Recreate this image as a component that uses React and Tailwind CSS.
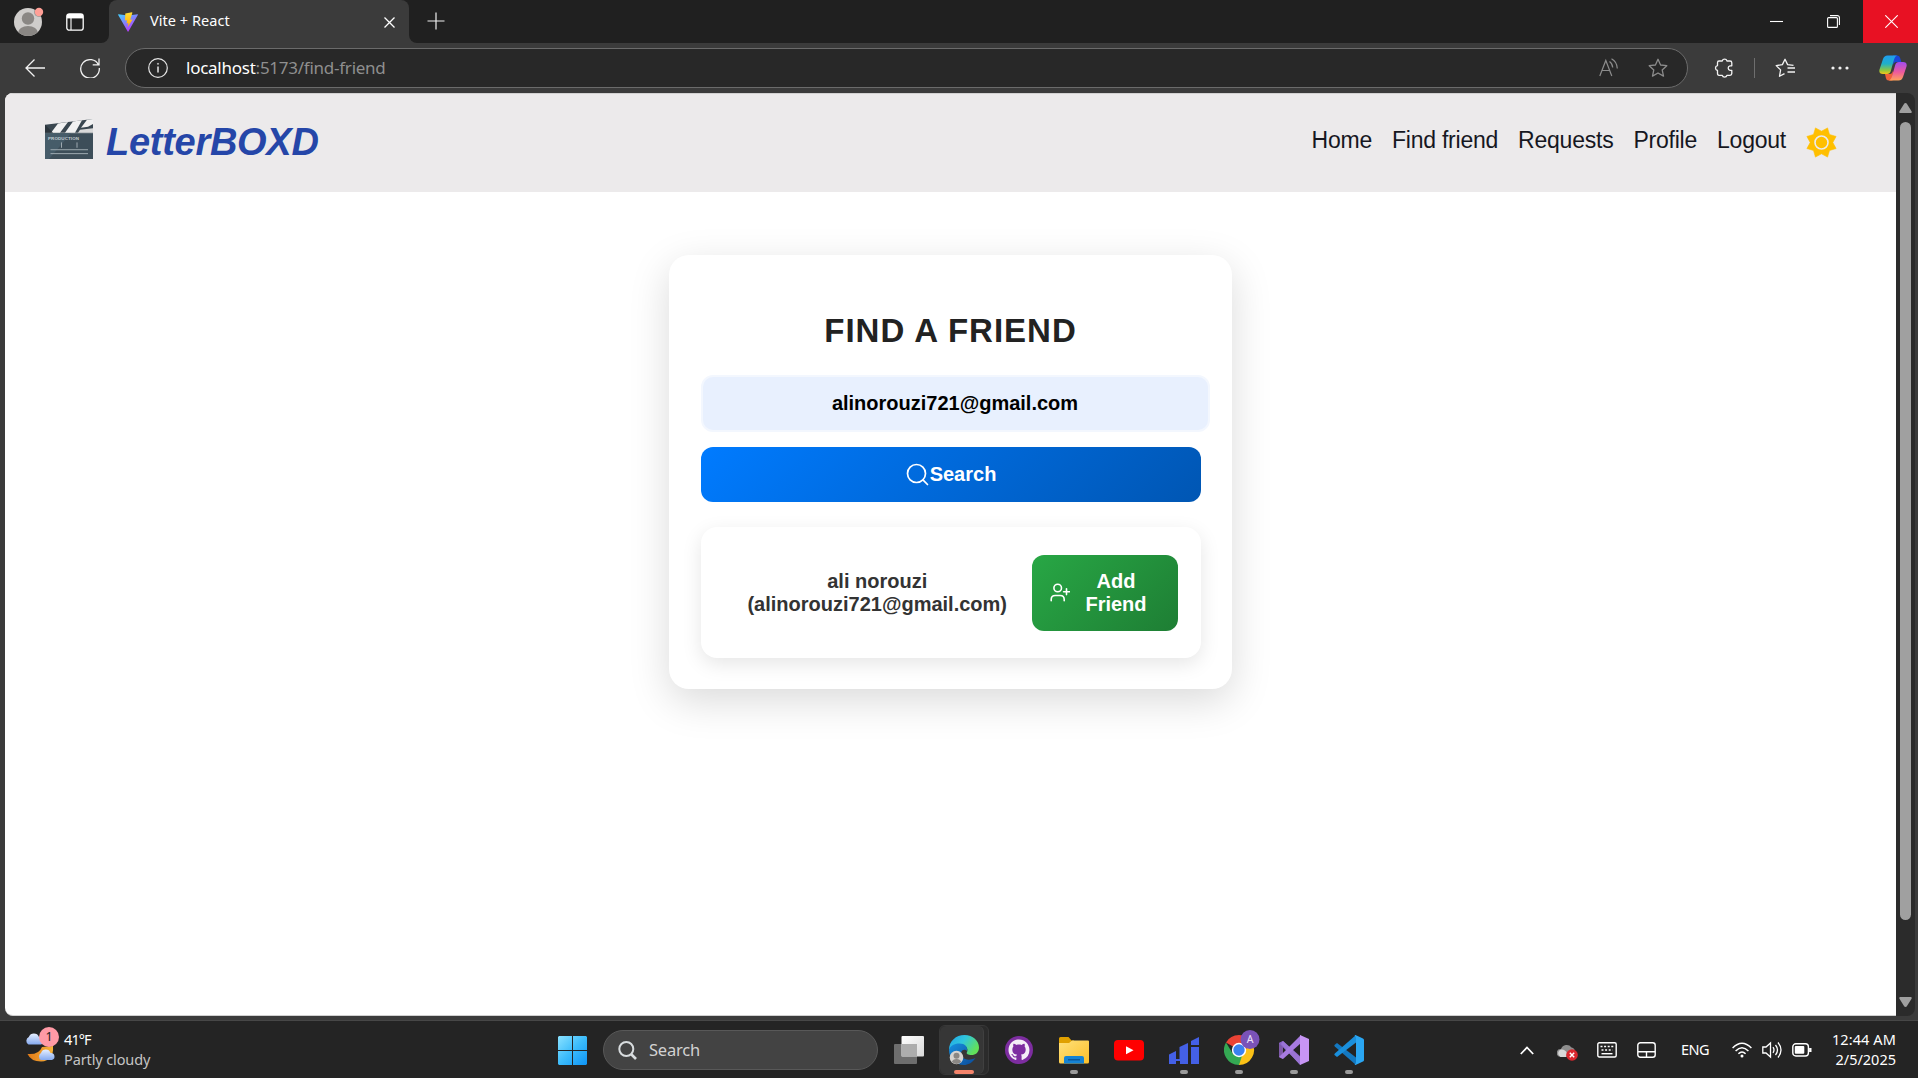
import React from "react";

const UI = "font-['Noto_Sans','Open_Sans',sans-serif]";
const WEB = "font-['Liberation_Sans',Arial,sans-serif]";

const ViteLogo = () => (
  <svg viewBox="0 0 20 20" className="h-5 w-5">
    <defs>
      <linearGradient id="viteA" x1="0" y1="0" x2="0.6" y2="1">
        <stop offset="0" stopColor="#41d1ff" />
        <stop offset="1" stopColor="#bd34fe" />
      </linearGradient>
      <linearGradient id="viteB" x1="0" y1="0" x2="0" y2="1">
        <stop offset="0" stopColor="#ffdd35" />
        <stop offset="1" stopColor="#ffa800" />
      </linearGradient>
    </defs>
    <path d="M0.3 2.2 10 3.6 19.7 2.2Q20 2.4 19.8 3L10.4 19.6Q10 20 9.7 19.6L.2 3Q0 2.4.3 2.2Z" fill="url(#viteA)" />
    <path d="M14 .3 7.3 1.6 7 8.6 9 8.2 8.6 11.5 10.4 11 9.6 15.2 14.6 7.4 12.2 7.8 14.4.8Z" fill="url(#viteB)" />
  </svg>
);

function TabBar() {
  return (
    <div className="flex h-[43px] bg-[#202020] text-white">
      <div className="flex w-[101px] items-center gap-6 bg-[#202020] pl-[14px]">
        <svg viewBox="0 0 30 30" className="h-[30px] w-[30px]">
          <defs><clipPath id="av"><circle cx="14" cy="15" r="14" /></clipPath></defs>
          <circle cx="14" cy="15" r="14" fill="#cfcdcb" />
          <g clipPath="url(#av)" fill="#8a8784">
            <circle cx="14" cy="11.5" r="6.2" />
            <ellipse cx="14" cy="26" rx="10" ry="7" />
          </g>
          <circle cx="25" cy="5" r="5" fill="#202020" opacity=".3" />
          <circle cx="25" cy="5" r="4.2" fill="#ff9f96" />
        </svg>
        <svg viewBox="0 0 18 18" className="ml-[-2px] h-[18px] w-[18px]" fill="none" stroke="#fff" strokeWidth="1.3">
          <rect x=".8" y=".8" width="16.4" height="16.4" rx="2.5" />
          <path d="M1 3.2h16" strokeWidth="4.4" />
          <path d="M5 5v12" strokeWidth="1.1" />
        </svg>
      </div>
      <div className="flex w-2 flex-col bg-[#3b3b3b]">
        <div className="h-full rounded-br-lg bg-[#202020]" />
      </div>
      <div className="flex w-[300px] items-center rounded-t-lg bg-[#3b3b3b] pl-[9px]">
        <ViteLogo />
        <span className={`mb-[2px] ml-3 flex-1 whitespace-nowrap text-[14.500px] leading-none tracking-[0.050px] ${UI}`}>Vite + React</span>
        <svg viewBox="0 0 11 11" className="mr-[14px] mt-px h-[11px] w-[11px]" stroke="#fff" strokeWidth="1.3"><path d="M.5.5l10 10M10.5.5l-10 10" /></svg>
      </div>
      <div className="flex w-2 flex-col bg-[#3b3b3b]">
        <div className="h-full rounded-bl-lg bg-[#202020]" />
      </div>
      <svg viewBox="0 0 18 18" className="ml-[10px] mt-3 h-[18px] w-[18px]" stroke="#f0f0f0" strokeWidth="1.2"><path d="M9 .5v17M.5 9h17" /></svg>
      <div className="ml-auto flex items-center">
        <svg viewBox="0 0 13 13" className="mr-11 h-[13px] w-[13px]" stroke="#fff" strokeWidth="1.1"><path d="M0 6.5h13" /></svg>
        <svg viewBox="0 0 13 13" className="mr-[23px] h-[13px] w-[13px]" stroke="#fff" fill="none" strokeWidth="1.1">
          <rect x=".6" y="2.6" width="9.8" height="9.8" rx="1" />
          <path d="M3 .6h7.4a2 2 0 0 1 2 2V10" />
        </svg>
        <div className="flex h-[43px] w-[55px] items-center justify-center bg-[#e81123] pl-[2px]">
          <svg viewBox="0 0 13 13" className="h-[13px] w-[13px]" stroke="#fff" strokeWidth="1.1"><path d="M.3.3l12.4 12.4M12.7.3L.3 12.7" /></svg>
        </div>
      </div>
    </div>
  );
}

const STAR = "M10 1.3 12.6 7l6.2.7-4.600 4.200 1.300 6.200L10 15l-5.500 3.100 1.300-6.200L1.200 7.700 7.400 7z";

function Toolbar() {
  return (
    <div className="flex h-[50px] items-center bg-[#3b3b3b]">
      <svg viewBox="0 0 20 18" className="ml-[25px] h-[18px] w-5" fill="none" stroke="#f2f2f2" strokeWidth="1.3"><path d="M20 9H1M9.500.5 1 9l8.500 8.500" /></svg>
      <svg viewBox="0 0 20 20" className="ml-[35px] h-5 w-5" fill="none" stroke="#f2f2f2" strokeWidth="1.3"><path d="M18.500 7A9.300 9.300 0 1 0 19.300 10M19 .5V6.800H12.700" /></svg>
      <div className="ml-[25px] flex h-10 w-[1563px] items-center rounded-full border border-[#6b6b6b] bg-[#282828]">
        <svg viewBox="0 0 20 20" className="ml-[22px] h-5 w-5" fill="none" stroke="#e6e6e6" strokeWidth="1.200"><circle cx="10" cy="10" r="9.300" /><path d="M10 8.500v6" strokeWidth="1.500" /><circle cx="10" cy="5.800" r=".6" fill="#e6e6e6" strokeWidth=".6" /></svg>
        <span className={`mb-[2px] ml-[18px] flex-1 whitespace-nowrap text-[17px] leading-none tracking-[-0.250px] text-[#8f8f8f] ${UI}`}><span className="text-white">localhost</span>:5173/find-friend</span>
        <svg viewBox="0 0 20 20" className="mr-[29px] h-5 w-5" fill="none" stroke="#8c8c8c" strokeWidth="1.200"><path d="M.8 18 6.800 2.500 12.800 18M3 12.500h7.700M10.500 3.500q3 2 3.200 6M12.500.8q5.500 3 5.800 9.700" /></svg>
        <svg viewBox="0 0 20 20" className="mr-[19px] h-5 w-5" fill="none" stroke="#8c8c8c" strokeWidth="1.300" strokeLinejoin="round"><path d={STAR} /></svg>
      </div>
      <svg viewBox="0 0 20 20" className="ml-[26px] h-5 w-5" fill="none" stroke="#f2f2f2" strokeWidth="1.300" strokeLinejoin="round">
        <path d="M5 3H8.200A2.500 2.500 0 0 1 13 3H16Q17.800 3 17.800 4.800V7.800H16A2.300 2.300 0 0 0 16 12.300H17.800V15.500Q17.800 17.300 16 17.300H13A2.500 2.500 0 0 1 8.200 17.300H5Q3.500 17.300 3.500 15.500V12.500A2.500 2.500 0 0 1 3.500 7.600V4.800Q3.500 3 5 3Z" />
      </svg>
      <div className="ml-5 h-5 w-px bg-[#6e6e6e]" />
      <svg viewBox="0 0 20 20" className="ml-5 h-5 w-5" fill="none" stroke="#f2f2f2" strokeWidth="1.300" strokeLinejoin="round">
        <path d="M18.500 7.300 12.600 6.600 10 1.300 7.400 6.600 1.200 7.600 5.600 11.900 4.500 18.300 9.500 15.600M12.500 10H20M12.500 14H20" />
      </svg>
      <svg viewBox="0 0 18 4" className="ml-9 h-1 w-[18px]" fill="#f2f2f2"><circle cx="2" cy="2" r="1.600" /><circle cx="9" cy="2" r="1.600" /><circle cx="16" cy="2" r="1.600" /></svg>
      <svg viewBox="0 0 28 26" className="ml-[30px] h-[26px] w-7">
        <defs>
          <linearGradient id="cpA" x1="0" y1="0" x2="0" y2="1"><stop offset="0" stopColor="#1f9cf0" /><stop offset=".45" stopColor="#1fb0c8" /><stop offset=".8" stopColor="#8fc73e" /><stop offset="1" stopColor="#f5c518" /></linearGradient>
          <linearGradient id="cpB" x1="0" y1="0" x2="0" y2="1"><stop offset="0" stopColor="#a04cf0" /><stop offset=".55" stopColor="#ee5a9c" /><stop offset="1" stopColor="#ffa25a" /></linearGradient>
        </defs>
        <path d="M14 .5h4.500q2 0 2.800 3l1 3.500h-5q-2.300 0-3 3z" fill="#1a46d8" />
        <path d="M13.500 25.500H9.500q-2 0-2.600-2.500L6 19h5q2 0 3-3.500z" fill="#f0603a" />
        <path d="M8.500.500h9.500q-2 .5-2.800 3.500L11.800 16q-.8 3-3.800 3H4Q-.5 19 .5 14.500L4 4Q5.200.5 8.500.5z" fill="url(#cpA)" />
        <path d="M19.500 25.500H10q2-.5 2.800-3.500L16.200 10q.8-3 3.800-3h4q4.500 0 3.500 4.500L24 22q-1.200 3.500-4.500 3.500z" fill="url(#cpB)" />
      </svg>
    </div>
  );
}

const Clapper = () => (
  <svg viewBox="0 0 48 41" className="h-10 w-12" preserveAspectRatio="none">
    <path d="M0 6 48 0V14H0z" fill="#3a4750" />
    <path d="M13 4.500 23 3.200 15 14H6zM28 2.500 37 1.300 30 14H20zM42 .7 48 0V5L43 8 36 9z" fill="#f1f1f1" />
    <path d="M35 11 48 9.500V14H33z" fill="#d9d9d9" />
    <path d="M0 6 8 14H0z" fill="#2c363d" />
    <rect y="14.500" width="48" height="26.500" fill="#3d4e59" />
    <path d="M0 14.500H26L4 41H0z" fill="#465c69" />
    <text x="3" y="21.500" fontSize="4.500" fontWeight="bold" textLength="31" fill="#c3ccd1" fontFamily="Liberation Sans">PRODUCTION</text>
    <path d="M16.500 24v5.500M32 24v5.500M5.500 31.500h37.500M5.500 35.500h37.500" stroke="#9fabb2" strokeWidth="1" fill="none" />
  </svg>
);

const sunPoints = Array.from({ length: 16 }, (_, i) => {
  const a = (Math.PI / 8) * i;
  const r = i % 2 ? 15.8 : 11.300;
  return `${(15.5 + r * Math.sin(a)).toFixed(2)},${(15.500 - r * Math.cos(a)).toFixed(2)}`;
}).join(" ");

function Header() {
  return (
    <header className={`flex h-[99px] items-start justify-between border-t border-[#d2d1d1] bg-[#eceaeb] pl-10 pr-[59px] ${WEB}`}>
      <div className="flex pt-[25px]">
        <Clapper />
        <span className="ml-[13px] mt-px text-[38px] font-bold italic leading-[44px] tracking-[-0.280px] text-[#2546a8]">LetterBOXD</span>
      </div>
      <nav className="flex gap-5 pt-8 text-[23px] leading-[28px] tracking-[-0.230px] text-[#16171f]">
        <a>Home</a><a>Find friend</a><a>Requests</a><a>Profile</a><a>Logout</a>
        <svg viewBox="0 0 31 31" className="mt-px h-[31px] w-[31px]">
          <polygon points={sunPoints} fill="#ffbf00" stroke="#ffbf00" strokeWidth=".6" strokeLinejoin="round" />
          <circle cx="15.500" cy="15.500" r="6.500" fill="#ffbf00" stroke="#eceaeb" strokeWidth="1.600" />
        </svg>
      </nav>
    </header>
  );
}

function FindFriend() {
  return (
    <section className={`mx-auto mt-[63px] h-[434px] w-[563px] rounded-[20px] bg-white pl-8 pr-[31px] pt-[58px] text-center text-[20px] font-bold leading-[23px] shadow-[0_12px_40px_rgba(0,0,0,0.15)] ${WEB}`}>
      <h1 className="pr-px text-[33px] leading-9 tracking-[1px] text-[#222]">FIND A FRIEND</h1>
      <div className="mt-[26px] flex h-[57px] w-[509px] items-center justify-center rounded-xl border-2 border-[#f3f7fe] bg-[#e8f0fe] pr-px text-black">alinorouzi721@gmail.com</div>
      <button className="mt-[15px] flex h-[55px] w-full items-center justify-center rounded-xl bg-[linear-gradient(135deg,#007bff,#0056b3)] text-white">
        <svg viewBox="0 0 23 23" className="mr-px h-[23px] w-[23px]" fill="none" stroke="#fff" strokeWidth="1.700" strokeLinecap="round"><circle cx="10.500" cy="10.500" r="9" /><path d="M17.200 17.200 21.500 21.500" /></svg>
        Search
      </button>
      <div className="mt-[25px] flex h-[131px] items-center justify-end rounded-2xl bg-white pr-[23px] shadow-[0_6px_20px_rgba(0,0,0,0.1)]">
        <p className="mr-[25px] text-[#333]">ali norouzi<br />(alinorouzi721@gmail.com)</p>
        <button className="flex h-[76px] w-[146px] items-center rounded-xl bg-[linear-gradient(135deg,#28a745,#1e7e34)] pl-[18px] text-white">
          <svg viewBox="0 0 20 19" className="h-[19px] w-5" fill="none" stroke="#fff" strokeWidth="1.600" strokeLinecap="round"><circle cx="7.700" cy="5" r="3.800" /><path d="M1.200 17.800V16.500Q1.200 12.500 5.200 12.500H10.200Q14.200 12.500 14.200 16.500V17.800M16.500 5.800v5.800M13.600 8.700h5.800" /></svg>
          <span className="ml-[15px] w-[62px]">Add Friend</span>
        </button>
      </div>
    </section>
  );
}

function Scrollbar() {
  return (
    <div className="flex w-[19px] flex-col items-center rounded-r-lg bg-[#2b2b2b] pt-[10px]">
      <svg viewBox="0 0 13 10" className="h-[10px] w-[13px]" fill="#a0a0a0"><path d="M6.500 0Q7.500 0 8 1L12.700 8.500Q13 10 12 10H1Q0 10 .3 8.500L5 1Q5.500 0 6.500 0z" /></svg>
      <div className="mt-[9px] h-[798px] w-[11px] rounded-full bg-[#a0a0a0]" />
      <svg viewBox="0 0 13 10" className="mb-[9px] mt-auto h-[10px] w-[13px] rotate-180" fill="#a0a0a0"><path d="M6.500 0Q7.500 0 8 1L12.700 8.500Q13 10 12 10H1Q0 10 .3 8.500L5 1Q5.500 0 6.500 0z" /></svg>
    </div>
  );
}

const ICON = "h-[30px] w-[30px]";

const Edge = () => (
  <svg viewBox="0 0 30 30" className={ICON}>
    <defs>
      <linearGradient id="edA" x1="0" y1="0" x2="1" y2=".5"><stop offset="0" stopColor="#1ea4ea" /><stop offset=".5" stopColor="#30c6dc" /><stop offset="1" stopColor="#62e05a" /></linearGradient>
      <linearGradient id="edB" x1="0" y1="0" x2="1" y2="1"><stop offset="0" stopColor="#1690e0" /><stop offset="1" stopColor="#0c4a98" /></linearGradient>
    </defs>
    <path d="M0 15C0 6 7 0 15.500 0 24 0 30 6 30 12.500c0 5-3.500 7.500-7.500 7.500-3.500 0-5.300-1.300-4.700-2.500C20 14 17 9.500 11 9.500 5.500 9.500 1.500 12 0 15z" fill="url(#edA)" />
    <path d="M0 15C1 11 5 8.500 10.500 8.500c5.500 0 8.500 3.500 7.300 7.500-1-2-5.300-2-5.800 2-.5 5 6 9 14.500 5C23 28 19 30 15 30 6.500 30 0 23.500 0 15z" fill="url(#edB)" />
    <circle cx="7.500" cy="22.500" r="6.800" fill="#d5d3d0" />
    <circle cx="7.500" cy="20.800" r="3" fill="#8a8784" />
    <path d="M2.800 27q1-3 4.700-3t4.700 3q-4.500 4-9.400 0z" fill="#8a8784" />
  </svg>
);
const GitHub = () => (
  <svg viewBox="0 0 30 30" className={ICON}>
    <circle cx="15" cy="15" r="14" fill="#7d2da0" />
    <path transform="translate(4.500 4.500) scale(1.310)" fill="#f4eef7" d="M8 0C3.580 0 0 3.580 0 8c0 3.540 2.290 6.530 5.470 7.590.4.070.55-.17.55-.38 0-.19-.01-.82-.01-1.490-2.010.37-2.530-.49-2.690-.94-.09-.23-.48-.94-.82-1.130-.28-.15-.68-.52-.01-.53.63-.01 1.080.58 1.230.82.72 1.210 1.870.87 2.330.66.07-.52.28-.87.51-1.070-1.780-.2-3.640-.89-3.640-3.950 0-.87.31-1.590.82-2.150-.08-.2-.36-1.020.08-2.120 0 0 .67-.21 2.200.82.64-.18 1.320-.27 2-.27s1.360.09 2 .27c1.530-1.040 2.200-.82 2.200-.82.44 1.100.16 1.920.08 2.120.51.56.82 1.270.82 2.150 0 3.070-1.870 3.750-3.650 3.950.29.25.54.73.54 1.480 0 1.070-.01 1.930-.01 2.200 0 .21.15.46.55.38A8.010 8.010 0 0 0 16 8c0-4.420-3.580-8-8-8z" />
  </svg>
);
const Folder = () => (
  <svg viewBox="0 0 30 30" className={ICON}>
    <defs><linearGradient id="fo" x1="0" y1="0" x2="1" y2="1"><stop offset="0" stopColor="#ffe07a" /><stop offset="1" stopColor="#fcc02a" /></linearGradient></defs>
    <path d="M0 3.500Q0 2 1.500 2h8l3 3.500H15V12H0z" fill="#e0a000" />
    <path d="M0 8h10l3-2.500h16q1 0 1 1V27q0 1.500-1.500 1.500h-27Q0 28.500 0 27z" fill="url(#fo)" />
    <path d="M5 28.500V23q0-2 2-2h16q2 0 2 2v5.500z" fill="#1583d4" />
    <path d="M9 24.800h12" stroke="#0a4f8e" strokeWidth="1.200" />
  </svg>
);
const YouTube = () => (
  <svg viewBox="0 0 30 30" className={ICON}>
    <rect y="5" width="30" height="20.500" rx="4" fill="#f00" />
    <path d="M12 11.300v8l7.500-4z" fill="#fff" />
  </svg>
);
const Bars = () => (
  <svg viewBox="0 0 30 30" className={ICON} fill="#4460e6">
    <path d="M0 29V19.500L7 16v8h3.500V12L19 8V29H11V26H7v3zM22 12h8v17h-8zM22 10V6l8-4v8z" />
  </svg>
);
const Chrome = () => (
  <svg viewBox="0 -5 36 35" className="h-[35px] w-9">
    <path d="M15 15 2 7.500A15 15 0 0 1 28 7.500z" fill="#ea4335" />
    <path d="M15 15 28 7.500A15 15 0 0 1 15 30z" fill="#fbc116" />
    <path d="M15 30A15 15 0 0 1 2 7.500L9 19 18 21z" fill="#34a853" />
    <path d="M15 8H28.300L21 15z" fill="#ea4335" />
    <circle cx="15" cy="15" r="7.200" fill="#fff" />
    <circle cx="15" cy="15" r="5.700" fill="#3b82f0" />
    <circle cx="26" cy="4.500" r="9.500" fill="#7a52b8" />
    <text x="26" y="8.300" fontSize="10.500" textAnchor="middle" fill="#ece2fa" fontFamily="Noto Sans">A</text>
  </svg>
);
const VisualStudio = () => (
  <svg viewBox="0 0 30 30" className={ICON}>
    <path d="M0 8 4 6V24L0 22z" fill="#7f5aa8" />
    <path d="M0 8 4 6 22 22V30L0 8.500z" fill="#8661c5" />
    <path d="M4 6 21 22V30L2 9z" fill="#9a74d4" />
    <path d="M4 24 22 8V0L0 22z" fill="#a77be0" />
    <path d="M21 0 30 4V26L21 30z" fill="#c795f5" />
  </svg>
);
const VSCode = () => (
  <svg viewBox="0 0 30 30" className={ICON}>
    <path d="M.5 10 3 8 22 22.500V30L.8 11.500Q0 10.700.5 10z" fill="#1478c0" />
    <path d="M.5 20 3 22 22 7.500V0L.8 18.500Q0 19.300.5 20z" fill="#1a8fdc" />
    <path d="M21.500 0 29 3.500Q30 4 30 5V25Q30 26 29 26.500L21.500 30 20.500 29.500Q22 29 22 27V3Q22 1 20.500.500z" fill="#2aa6f2" />
  </svg>
);

function TaskIcon({ children, open }) {
  return (
    <div className="flex h-[49px] w-[55px] flex-col items-center justify-end">
      {children}
      <div className={open ? "mt-[5px] h-1 w-2 rounded-full bg-[#9a9a9a]" : "mt-[5px] h-1 w-2"} />
    </div>
  );
}

function Taskbar() {
  return (
    <footer className={`flex h-[58px] items-start border-t border-[#474747] bg-[#242424] text-white ${UI}`}>
      <div className="flex w-[558px] pl-[25px] pt-[6px]">
        <svg viewBox="0 0 34 36" className="h-9 w-[34px]">
          <defs>
            <linearGradient id="cl" x1="0" y1="0" x2="0" y2="1"><stop offset="0" stopColor="#e6efff" /><stop offset="1" stopColor="#85aaf0" /></linearGradient>
            <linearGradient id="mo" x1="0" y1="0" x2="1" y2="0"><stop offset="0" stopColor="#e07a18" /><stop offset="1" stopColor="#f7b43c" /></linearGradient>
          </defs>
          <path d="M2.500 27Q14 28 17 20l11-1q1 15-12 15.500Q6 34.500 2.500 27z" fill="url(#mo)" />
          <path d="M3.500 17.500A4.200 4.200 0 0 1 3.800 10 5.500 5.500 0 0 1 14 10 3.800 3.800 0 0 1 16 17.500z" fill="url(#cl)" />
          <path d="M16 33A4 4 0 0 1 16 26 5 5 0 0 1 25.500 26 3.600 3.600 0 0 1 27 33z" fill="url(#cl)" />
          <circle cx="24" cy="10" r="10" fill="#ff9aa6" />
          <text x="24" y="14.300" textAnchor="middle" fontSize="12.500" fill="#222" fontFamily="Noto Sans">1</text>
        </svg>
        <div className="ml-[5px] whitespace-nowrap text-[14.500px] leading-5 tracking-[-0.120px]">
          <div className="mt-[2px] tracking-[-0.900px]">41°F</div>
          <div className="text-[#c4c4c4]">Partly cloudy</div>
        </div>
      </div>
      <svg viewBox="0 0 29 29" className="mt-[15px] h-[29px] w-[29px]">
        <defs><linearGradient id="wn" gradientUnits="userSpaceOnUse" x1="0" y1="0" x2="29" y2="29"><stop offset="0" stopColor="#8be2ff" /><stop offset=".5" stopColor="#3cbcfb" /><stop offset="1" stopColor="#0e94f6" /></linearGradient></defs>
        <path d="M1 0H14V14H0V1zM15 0H28L29 1V14H15zM0 15H14V29H1L0 28zM15 15H29V28L28 29H15z" fill="url(#wn)" />
      </svg>
      <div className="ml-4 mt-[9px] flex h-10 w-[275px] items-center rounded-full border border-[#585858] bg-[#434343] pl-[14px]">
        <svg viewBox="0 0 19 19" className="h-[19px] w-[19px]" fill="none" stroke="#d8dcde" strokeWidth="2"><circle cx="8.300" cy="8" r="7" /><path d="M13 13 18 18" strokeWidth="2.600" /></svg>
        <span className="ml-3 mt-px text-[16.500px] tracking-[-0.200px] text-[#d2d2d2]">Search</span>
      </div>
      <svg viewBox="0 0 30 28" className="ml-4 mt-[15px] h-7 w-[30px]">
        <defs><linearGradient id="tv" x1="0" y1="0" x2="1" y2="1"><stop offset="0" stopColor="#fff" /><stop offset="1" stopColor="#d9d9d9" /></linearGradient></defs>
        <rect y="8" width="23" height="20" rx="1" fill="#6e6e6e" />
        <rect x="7.500" width="22.500" height="20.500" rx="1" fill="url(#tv)" />
        <path d="M7.500 8H23V20.500H7.500z" fill="#adadad" />
      </svg>
      <div className="ml-[15px] mt-1 flex">
        <div className="flex h-[50px] w-[50px] rounded-md border border-[#383838] bg-[#2b2b2b]">
          <div className="flex h-[48px] w-[44px] flex-col items-center justify-end rounded-md border-r border-[#404040] bg-[#363636] pl-[6px]">
            <div className="mr-[2px]"><Edge /></div>
            <div className="mr-[2px] mt-[5px] h-1 w-5 rounded-full bg-[#f4846b]" />
          </div>
        </div>
        <div className="ml-[2px] flex">
          <TaskIcon><GitHub /></TaskIcon>
          <TaskIcon open><Folder /></TaskIcon>
          <TaskIcon><YouTube /></TaskIcon>
          <TaskIcon open><Bars /></TaskIcon>
          <TaskIcon open><div className="ml-[6px]"><Chrome /></div></TaskIcon>
          <TaskIcon open><VisualStudio /></TaskIcon>
          <TaskIcon open><VSCode /></TaskIcon>
        </div>
      </div>
      <div className="ml-auto flex h-[58px] items-center pr-[22px]">
        <svg viewBox="0 0 14 9" className="mr-[23px] h-[9px] w-[14px]" fill="none" stroke="#fff" strokeWidth="1.800"><path d="M.8 8 7 1.500 13.200 8" /></svg>
        <svg viewBox="0 0 21 18" className="mr-[19px] mt-[3px] h-[18px] w-[21px]">
          <path d="M3.500 14A4 4 0 0 1 4 6 6 6 0 0 1 14.500 4.500Q18 5 18 9v5z" fill="#8d8d8d" />
          <path d="M3.500 14A4 4 0 0 1 4 6.500Q8 6 10 10L9 14z" fill="#d8d8d8" />
          <circle cx="15" cy="12" r="5.800" fill="#d9272e" /><path d="M12.800 9.800l4.400 4.400M17.200 9.800l-4.400 4.400" stroke="#fff" strokeWidth="1.400" />
        </svg>
        <svg viewBox="0 0 20 16" className="mr-5 h-4 w-5" fill="none" stroke="#fff" strokeWidth="1.400">
          <rect x=".8" y=".8" width="18.400" height="14.200" rx="1.500" />
          <path d="M3.500 4.500h13" strokeDasharray="2 1.600" strokeWidth="1.600" /><path d="M4.500 8h11" strokeDasharray="2 1.600" strokeWidth="1.600" /><path d="M4.500 11.700h11" />
        </svg>
        <svg viewBox="0 0 19 16" className="mr-[25px] h-4 w-[19px]" fill="none" stroke="#fff" strokeWidth="1.400"><rect x=".8" y=".8" width="17.400" height="14.400" rx="2.500" /><path d="M1 9.700h17M9.500 9.700v5.500" /></svg>
        <span className="mr-[21px] w-[30px] whitespace-nowrap text-[14.500px] tracking-[-0.500px]">ENG</span>
        <svg viewBox="0 0 20 16" className="mr-[10px] h-4 w-5" fill="none" stroke="#fff" strokeWidth="1.500"><path d="M.6 6Q10-3.600 19.400 6M3.600 9Q10 2.400 16.400 9M6.400 11.800Q10 8.200 13.600 11.800" /><circle cx="10" cy="14" r="1.500" fill="#fff" stroke="none" /></svg>
        <svg viewBox="0 0 20 18" className="mr-[10px] h-[18px] w-5" fill="none" stroke="#fff" strokeWidth="1.300"><path d="M.8 6H4L8.500 2V16L4 12H.8zM11 6.200q2 2.800 0 5.600M13.500 4q4 5 0 10M16 1.500q6 7.500 0 15" /></svg>
        <svg viewBox="0 0 20 14" className="mr-5 h-[14px] w-5" fill="none" stroke="#fff" strokeWidth="1.400"><rect x=".8" y=".8" width="15.600" height="12.200" rx="3" /><rect x="2.800" y="3" width="9.500" height="7.800" rx="1" fill="#fff" stroke="none" /><path d="M18.300 5v4" strokeWidth="2.400" /></svg>
        <div className="mb-[2px] w-[64px] whitespace-nowrap text-[14.500px] leading-5 tracking-[0.100px]"><div className="flex justify-end">12:44 AM</div><div className="flex justify-end tracking-[0px]">2/5/2025</div></div>
      </div>
    </footer>
  );
}

export default function App() {
  return (
    <div className="flex h-[1078px] w-[1918px] flex-col overflow-hidden bg-[#3b3b3b]">
      <TabBar />
      <Toolbar />
      <div className="flex h-[923px] pl-[5px]">
        <main className="w-[1891px] overflow-hidden rounded-l-lg border-b border-[#d0d0d0] bg-white">
          <Header />
          <FindFriend />
        </main>
        <Scrollbar />
      </div>
      <div className="h-1" />
      <Taskbar />
    </div>
  );
}
